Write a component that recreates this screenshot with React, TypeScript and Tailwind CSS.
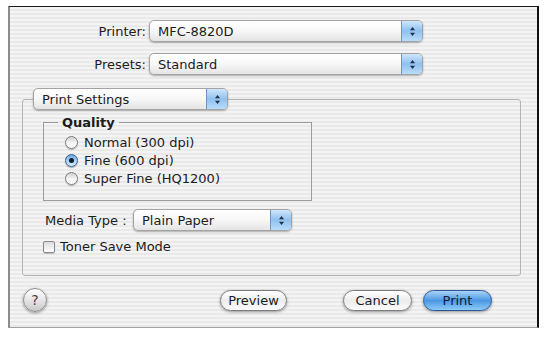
import React from "react";

const font = "font-['DejaVu_Sans',sans-serif]";

function Arrows() {
  return (
    <svg width="7" height="11" viewBox="0 0 7 11">
      <path d="M3.5 1 L6 4.2 L1 4.2 Z" fill="#1d2f4a" />
      <path d="M3.5 10 L6 6.8 L1 6.8 Z" fill="#1d2f4a" />
    </svg>
  );
}

function Popup({ text, className }: { text: string; className: string }) {
  return (
    <div
      className={
        "relative z-10 flex h-[22px] items-stretch rounded-[5px] border border-[#a3a3a3] bg-gradient-to-b from-white via-[#f7f7f7] to-[#e4e4e4] shadow-[0_1px_2px_rgba(0,0,0,0.3)] " +
        className
      }
    >
      <div className="flex flex-1 items-center pl-[8px] text-[13px] leading-none text-[#1c1c1c]">{text}</div>
      <div className="flex w-[21px] items-center justify-center rounded-r-[4px] border-l border-[#6f95c4] bg-gradient-to-b from-[#cfe6fb] via-[#8fc0ef] to-[#b9dcfb]">
        <Arrows />
      </div>
    </div>
  );
}

function Radio({ checked, label }: { checked?: boolean; label: string }) {
  return (
    <div className="flex h-[18px] items-center">
      {checked ? (
        <div className="flex h-[13px] w-[13px] items-center justify-center rounded-full border border-[#3a5f8f] bg-gradient-to-b from-[#6ea4dc] via-[#a8d0f3] to-[#d6ecff] shadow-[0_1px_1px_rgba(0,0,0,0.3)]">
          <div className="h-[5px] w-[5px] rounded-full bg-[#0f1f33]" />
        </div>
      ) : (
        <div className="h-[13px] w-[13px] rounded-full border border-[#7e7e7e] bg-gradient-to-b from-[#cfcfcf] via-[#f4f4f4] to-white shadow-[0_1px_1px_rgba(0,0,0,0.25)]" />
      )}
      <span className="ml-[6px] text-[13px] leading-none text-[#1c1c1c]">{label}</span>
    </div>
  );
}

function Pill({ text, w, blue }: { text: string; w: string; blue?: boolean }) {
  return (
    <div
      className={
        "flex h-[21px] items-center justify-center rounded-full border text-[13px] leading-none shadow-[0_1px_3px_rgba(0,0,0,0.4)] " +
        w +
        (blue
          ? " border-[#2b5797] bg-gradient-to-b from-[#aad4f8] via-[#4c97e3] to-[#8ccaf8] text-[#0d2038]"
          : " border-[#7c7c7c] bg-gradient-to-b from-white via-[#ededed] to-[#fafafa] text-[#1c1c1c]")
      }
    >
      {text}
    </div>
  );
}

export default function App() {
  const stripe =
    "bg-[repeating-linear-gradient(180deg,#f4f4f4_0px,#f4f4f4_2px,#e9e9e9_2px,#e9e9e9_4px)]";
  return (
    <div className={"h-[340px] w-[556px] bg-white pt-[6px] pl-[8px] " + font}>
      <div
        className={
          "flex h-[322px] w-[531px] flex-col border-t border-r-2 border-b border-l-2 border-t-[#1a1a1a] border-r-[#111] border-b-[#a0a0a0] border-l-[#8c8c8c] " +
          stripe
        }
      >
        <div className="mt-[13px] flex items-center">
          <div className="w-[136px] text-right text-[13px] leading-none text-[#1c1c1c]">Printer:</div>
          <Popup text="MFC-8820D" className="ml-[3px] w-[274px]" />
        </div>
        <div className="mt-[11px] flex items-center">
          <div className="w-[136px] text-right text-[13px] leading-none text-[#1c1c1c]">Presets:</div>
          <Popup text="Standard" className="ml-[3px] w-[274px]" />
        </div>

        <fieldset className="mt-[13px] ml-[12px] h-[188px] w-[499px] rounded-[3px] border border-[#b4b4b4] px-0">
          <legend className="ml-[10px] p-0">
            <Popup text="Print Settings" className="w-[195px]" />
          </legend>

          <fieldset className="mt-[5px] ml-[20px] h-[86px] w-[269px] border border-[#9c9c9c]">
            <legend className="ml-[14px] px-[4px] text-[13px] leading-[15px] font-bold text-[#1c1c1c]">Quality</legend>
            <div className="mt-[3px] flex flex-col pl-[21px]">
              <Radio label="Normal (300 dpi)" />
              <Radio label="Fine (600 dpi)" checked />
              <Radio label="Super Fine (HQ1200)" />
            </div>
          </fieldset>

          <div className="mt-[8px] ml-[22px] flex items-center">
            <div className="w-[88px] text-[13px] leading-none text-[#1c1c1c]">Media Type :</div>
            <Popup text="Plain Paper" className="w-[159px]" />
          </div>

          <div className="mt-[9px] ml-[20px] flex items-center">
            <div className="h-[12px] w-[12px] rounded-[2px] border border-[#8a8a8a] bg-gradient-to-b from-[#dcdcdc] to-white shadow-[0_1px_1px_rgba(0,0,0,0.2)]" />
            <span className="ml-[5px] text-[13px] leading-none text-[#1c1c1c]">Toner Save Mode</span>
          </div>
        </fieldset>

        <div className="mt-[12px] flex items-center">
          <div className="ml-[13px] flex h-[24px] w-[24px] items-center justify-center rounded-full border border-[#8f8f8f] bg-gradient-to-b from-white via-[#e6e6e6] to-[#c9c9c9] text-[14px] leading-none text-[#444] shadow-[0_1px_3px_rgba(0,0,0,0.4)]">
            ?
          </div>
          <div className="ml-[173px]">
            <Pill text="Preview" w="w-[67px]" />
          </div>
          <div className="ml-[56px]">
            <Pill text="Cancel" w="w-[69px]" />
          </div>
          <div className="ml-[11px]">
            <Pill text="Print" w="w-[69px]" blue />
          </div>
        </div>
      </div>
    </div>
  );
}
